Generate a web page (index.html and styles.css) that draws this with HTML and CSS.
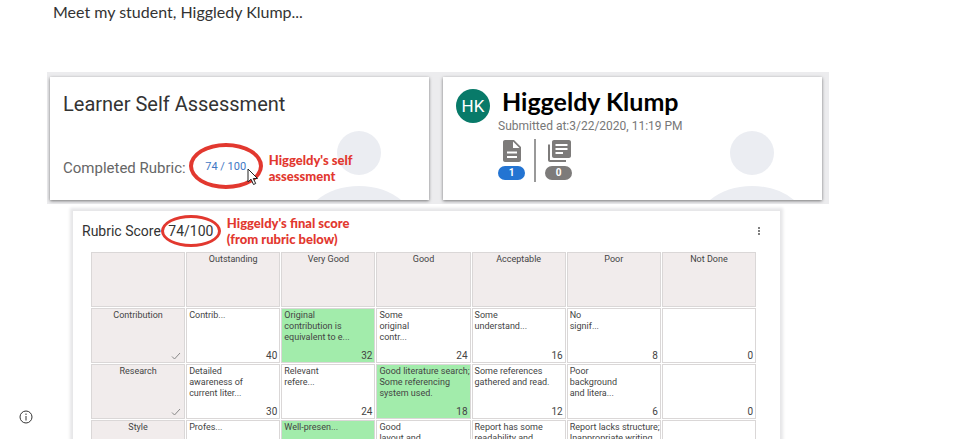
FILE: index.html
```html
<!DOCTYPE html>
<html lang="en">
<head>
    <meta charset="UTF-8">
    <meta name="viewport" content="width=device-width, initial-scale=1.0">
    <title>Learner Self Assessment</title>
    <link rel="stylesheet" href="styles.css">
</head>
<body>

    <main class="page">
        <p class="intro">Meet my student, Higgledy Klump...</p>

        <div class="panel">
            <section class="card">
                <svg class="person" viewBox="0 0 84 70" aria-hidden="true">
                    <circle cx="42" cy="23" r="22"/>
                    <path d="M0 70Q17 56 42 56T84 70Z"/>
                </svg>
                <h2 class="card-title">Learner Self Assessment</h2>
                <div class="score-row">
                    <span class="label">Completed Rubric:</span>
                    <a class="oval oval-large" href="#rubric">74 / 100
                        <svg class="cursor" viewBox="0 0 12 18" aria-hidden="true">
                            <path d="M1 1V14L4 11.200L6.500 16.500L8.700 15.500L6.300 10.500H10.500Z"/>
                        </svg>
                    </a>
                    <span class="note">Higgeldy's self<br>assessment</span>
                </div>
            </section>

            <section class="card student">
                <svg class="person" viewBox="0 0 84 70" aria-hidden="true">
                    <circle cx="42" cy="23" r="22"/>
                    <path d="M0 70Q17 56 42 56T84 70Z"/>
                </svg>
                <div class="avatar">HK</div>
                <div class="student-info">
                    <h2 class="student-name">Higgeldy Klump</h2>
                    <p class="submitted">Submitted at:3/22/2020, 11:19 PM</p>
                    <div class="files">
                        <div class="file">
                            <svg class="file-icon" viewBox="0 0 24 24" aria-hidden="true">
                                <path d="M14 1H5C3.900 1 3 1.900 3 3V21C3 22.100 3.900 23 5 23H19C20.100 23 21 22.100 21 21V8ZM17 19H7V17H17ZM17 14.500H7V12.500H17ZM13 9V2.500L19.500 9Z"/>
                            </svg>
                            <span class="count count-active">1</span>
                        </div>
                        <div class="file">
                            <svg class="file-icon" viewBox="0 0 24 24" aria-hidden="true">
                                <path d="M3 5.500H1V21C1 22.100 1.900 23 3 23H19V21H3ZM22 1H7C5.900 1 5 1.900 5 3V17C5 18.100 5.900 19 7 19H22C23.100 19 24 18.100 24 17V3C24 1.900 23.100 1 22 1ZM20.500 11H8.500V9H20.500ZM16 15H8.500V13H16ZM20.500 7H8.500V5H20.500Z"/>
                            </svg>
                            <span class="count">0</span>
                        </div>
                    </div>
                </div>
            </section>
        </div>

        <section class="rubric" id="rubric">
            <header class="rubric-header">
                <h3 class="rubric-title">Rubric Score</h3>
                <span class="oval oval-small">74/100</span>
                <span class="note">Higgeldy's final score<br>(from rubric below)</span>
                <button class="menu" type="button" aria-label="Rubric options">
                    <svg viewBox="0 0 4 10" aria-hidden="true">
                        <circle cx="2" cy="2" r="1"/>
                        <circle cx="2" cy="5" r="1"/>
                        <circle cx="2" cy="8" r="1"/>
                    </svg>
                </button>
            </header>

            <table class="rubric-table">
                <thead>
                    <tr>
                        <th></th>
                        <th scope="col">Outstanding</th>
                        <th scope="col">Very Good</th>
                        <th scope="col">Good</th>
                        <th scope="col">Acceptable</th>
                        <th scope="col">Poor</th>
                        <th scope="col">Not Done</th>
                    </tr>
                </thead>
                <tbody>
                    <tr>
                        <th scope="row"><div class="cell">Contribution <svg class="check" viewBox="0 0 10 8" aria-hidden="true"><path d="M1 4.500L3.500 7L9 1"/></svg></div></th>
                        <td><div class="cell">Contrib... <span class="points">40</span></div></td>
                        <td class="selected"><div class="cell"><span>Original<br>contribution is<br>equivalent to e...</span> <span class="points">32</span></div></td>
                        <td><div class="cell"><span>Some<br>original<br>contr...</span> <span class="points">24</span></div></td>
                        <td><div class="cell"><span>Some<br>understand...</span> <span class="points">16</span></div></td>
                        <td><div class="cell"><span>No<br>signif...</span> <span class="points">8</span></div></td>
                        <td><div class="cell"><span class="points">0</span></div></td>
                    </tr>
                    <tr>
                        <th scope="row"><div class="cell">Research <svg class="check" viewBox="0 0 10 8" aria-hidden="true"><path d="M1 4.500L3.500 7L9 1"/></svg></div></th>
                        <td><div class="cell"><span>Detailed<br>awareness of<br>current liter...</span> <span class="points">30</span></div></td>
                        <td><div class="cell"><span>Relevant<br>refere...</span> <span class="points">24</span></div></td>
                        <td class="selected"><div class="cell"><span>Good literature search;<br>Some referencing<br>system used.</span> <span class="points">18</span></div></td>
                        <td><div class="cell"><span>Some references<br>gathered and read.</span> <span class="points">12</span></div></td>
                        <td><div class="cell"><span>Poor<br>background<br>and litera...</span> <span class="points">6</span></div></td>
                        <td><div class="cell"><span class="points">0</span></div></td>
                    </tr>
                    <tr>
                        <th scope="row"><div class="cell">Style</div></th>
                        <td><div class="cell">Profes...</div></td>
                        <td class="selected"><div class="cell">Well-presen...</div></td>
                        <td><div class="cell"><span>Good<br>layout and</span></div></td>
                        <td><div class="cell"><span>Report has some<br>readability and</span></div></td>
                        <td><div class="cell"><span>Report lacks structure;<br>Inappropriate writing</span></div></td>
                        <td><div class="cell"></div></td>
                    </tr>
                </tbody>
            </table>
        </section>
    </main>

    <button class="info" type="button" aria-label="Information">
        <svg viewBox="0 0 14 14" aria-hidden="true">
            <circle cx="7" cy="7" r="6"/>
            <path d="M7 6V10.500M7 3.500V5"/>
        </svg>
    </button>

</body>
</html>
```

FILE: styles.css
```css
* {
    box-sizing: border-box;
}

body {
    margin: 0;
    background-color: #fff;
    font-family: Roboto, Arial, sans-serif;
    color: #333;
}

h2, h3, p {
    margin: 0;
    font-weight: normal;
}

button {
    padding: 0;
    border: none;
    background: none;
    cursor: pointer;
}

.page {
    height: 100vh;
    overflow: hidden;
    padding: 0 130px 0 47px;
}

.intro {
    padding: 1px 6px 0;
    margin-bottom: 49px;
    font-family: Lato, sans-serif;
    font-size: 16px;
    line-height: 22px;
}

/* Summary cards */
.panel {
    display: grid;
    grid-template-columns: 1fr 1fr;
    gap: 14px;
    padding: 5px 7px 4px 3px;
    background-color: #ececee;
}

.card {
    position: relative;
    height: 123px;
    padding: 14px 13px;
    background-color: #fff;
    box-shadow: 0 1px 3px rgba(0, 0, 0, 0.5);
}

.person {
    position: absolute;
    right: 28px;
    bottom: 0;
    width: 84px;
    height: 70px;
    fill: #ebedf2;
}

.card-title {
    font-size: 20px;
    line-height: 26px;
}

.score-row {
    position: relative;
    display: flex;
    align-items: center;
    margin-top: 26px;
}

.label {
    padding: 3px 3px 0 0;
    font-size: 15px;
    color: #666;
}

/* Red ring drawn around a score */
.oval {
    position: relative;
    display: flex;
    align-items: center;
    justify-content: center;
    flex: none;
    border: 4px solid #e2382f;
    border-radius: 50%;
    text-decoration: none;
}

.oval-large {
    width: 74px;
    height: 46px;
    font-size: 11px;
    color: #4178c4;
}

.oval-small {
    width: 60px;
    height: 32px;
    border-width: 3px;
    font-size: 14px;
    color: #333;
}

.cursor {
    position: absolute;
    right: 0;
    bottom: -1px;
    width: 12px;
    height: 18px;
    fill: #fff;
    stroke: #222;
}

.note {
    margin-left: 6px;
    font-family: Lato, sans-serif;
    font-size: 13px;
    font-weight: 900;
    line-height: 16px;
    color: #e2382f;
}

.score-row .note {
    padding-top: 3px;
}

.student {
    display: flex;
    gap: 8px;
    padding-top: 9px;
}

.avatar {
    display: flex;
    align-items: center;
    justify-content: center;
    width: 34px;
    height: 34px;
    margin-top: 3px;
    border-radius: 50%;
    background-color: #087a69;
    font-size: 17px;
    color: #fff;
}

.student-name {
    padding-left: 4px;
    font-family: Lato, sans-serif;
    font-size: 25px;
    font-weight: bold;
    line-height: 30px;
    color: #000;
}

.submitted {
    font-size: 12px;
    line-height: 20px;
    color: #777;
}

.files {
    display: flex;
    margin-top: 3px;
}

.file {
    display: flex;
    flex-direction: column;
    align-items: center;
    gap: 3px;
    height: 43px;
}

.file + .file {
    margin-left: 9px;
    padding-left: 9px;
    border-left: 2px solid #999;
}

.file-icon {
    width: 24px;
    height: 24px;
    fill: #7d7b7a;
}

.count {
    width: 27px;
    border-radius: 7px;
    background-color: #7d7b7a;
    font-size: 10px;
    font-weight: bold;
    line-height: 14px;
    text-align: center;
    color: #fff;
}

.count-active {
    background-color: #2374d2;
}

/* Rubric */
.rubric {
    margin: 7px 49px 0 26px;
    padding: 4px 23px 20px 17px;
    background-color: #fff;
    box-shadow: 0 0 3px 3px #e6e6e8;
}

.rubric-header {
    display: flex;
    align-items: center;
    margin: 0 -4px 0 -8px;
    padding-bottom: 4px;
}

.rubric-title {
    font-size: 14px;
}

.menu {
    display: flex;
    margin-left: auto;
}

.menu svg {
    width: 4px;
    height: 10px;
    fill: #555;
}

.rubric-table {
    width: 100%;
    table-layout: fixed;
    border-collapse: separate;
    border-spacing: 1px;
    font-size: 9px;
    line-height: 11px;
    color: #444;
}

.rubric-table th,
.rubric-table td {
    height: 55px;
    padding: 1px 2px;
    border: 1px solid #dad7d7;
    font-weight: normal;
    text-align: left;
    vertical-align: top;
    white-space: nowrap;
}

.rubric-table th {
    background-color: #f1ecec;
    text-align: center;
}

.rubric-table .selected {
    background-color: #a2ecab;
}

.cell {
    display: flex;
    flex-direction: column;
    height: 51px;
}

.points {
    margin-top: auto;
    font-size: 10px;
    text-align: right;
}

.check {
    align-self: flex-end;
    width: 10px;
    height: 8px;
    margin: auto 1px 1px;
    fill: none;
    stroke: #888;
}

.info {
    position: fixed;
    left: 19px;
    bottom: 15px;
    display: flex;
}

.info svg {
    width: 14px;
    height: 14px;
    fill: none;
    stroke: #333;
}
```
